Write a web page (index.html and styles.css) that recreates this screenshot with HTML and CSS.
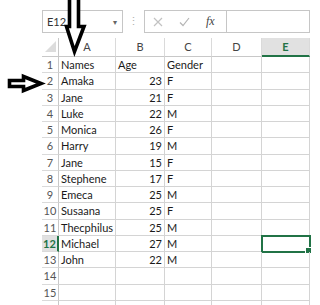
FILE: index.html
```html
<!DOCTYPE html>
<html lang="en">
<head>
  <meta charset="UTF-8">
  <title>Sheet</title>
  <link rel="stylesheet" href="styles.css">
</head>
<body>
  <div class="formula-bar">
    <div class="name-box">
      <span>E12</span>
      <span class="drop">&#9662;</span>
    </div>
    <div class="grip">&#8942;</div>
    <div class="fn-box">
      <svg class="ico" width="10" height="10" viewBox="0 0 10 10"><path d="M1 1 L9 9 M9 1 L1 9" stroke="#c2c2c2" stroke-width="1.2" fill="none"/></svg>
      <svg class="ico" width="11" height="10" viewBox="0 0 11 10"><path d="M1 5.5 L4 8.5 L10 1" stroke="#b5b5b5" stroke-width="1.2" fill="none"/></svg>
      <span class="fx">fx</span>
    </div>
    <div class="formula-input"></div>
  </div>

  <div class="sheet">
    <div class="corner"><svg width="11" height="11" viewBox="0 0 11 11"><polygon points="11,0 11,11 0,11" fill="#dcdcdc"/></svg></div>
    <div class="col-head">A</div>
    <div class="col-head">B</div>
    <div class="col-head">C</div>
    <div class="col-head">D</div>
    <div class="col-head active">E</div>

    <div class="row-head">1</div><div class="cell">Names</div><div class="cell">Age</div><div class="cell">Gender</div><div class="cell"></div><div class="cell"></div>
    <div class="row-head">2</div><div class="cell">Amaka</div><div class="cell num">23</div><div class="cell">F</div><div class="cell"></div><div class="cell"></div>
    <div class="row-head">3</div><div class="cell">Jane</div><div class="cell num">21</div><div class="cell">F</div><div class="cell"></div><div class="cell"></div>
    <div class="row-head">4</div><div class="cell">Luke</div><div class="cell num">22</div><div class="cell">M</div><div class="cell"></div><div class="cell"></div>
    <div class="row-head">5</div><div class="cell">Monica</div><div class="cell num">26</div><div class="cell">F</div><div class="cell"></div><div class="cell"></div>
    <div class="row-head">6</div><div class="cell">Harry</div><div class="cell num">19</div><div class="cell">M</div><div class="cell"></div><div class="cell"></div>
    <div class="row-head">7</div><div class="cell">Jane</div><div class="cell num">15</div><div class="cell">F</div><div class="cell"></div><div class="cell"></div>
    <div class="row-head">8</div><div class="cell">Stephene</div><div class="cell num">17</div><div class="cell">F</div><div class="cell"></div><div class="cell"></div>
    <div class="row-head">9</div><div class="cell">Emeca</div><div class="cell num">25</div><div class="cell">M</div><div class="cell"></div><div class="cell"></div>
    <div class="row-head">10</div><div class="cell">Susaana</div><div class="cell num">25</div><div class="cell">F</div><div class="cell"></div><div class="cell"></div>
    <div class="row-head">11</div><div class="cell">Thecphilus</div><div class="cell num">25</div><div class="cell">M</div><div class="cell"></div><div class="cell"></div>
    <div class="row-head active">12</div><div class="cell">Michael</div><div class="cell num">27</div><div class="cell">M</div><div class="cell"></div><div class="cell selected"></div>
    <div class="row-head">13</div><div class="cell">John</div><div class="cell num">22</div><div class="cell">M</div><div class="cell"></div><div class="cell"></div>
    <div class="row-head">14</div><div class="cell"></div><div class="cell"></div><div class="cell"></div><div class="cell"></div><div class="cell"></div>
    <div class="row-head">15</div><div class="cell"></div><div class="cell"></div><div class="cell"></div><div class="cell"></div><div class="cell"></div>
    <div class="row-head"></div><div class="cell"></div><div class="cell"></div><div class="cell"></div><div class="cell"></div><div class="cell"></div>
  </div>

  <!-- annotation arrows drawn over the sheet -->
  <svg class="arrows" width="320" height="305" viewBox="0 0 320 305">
    <path d="M69.5 -2 L69.5 26.5 L66.5 26.5 L74.5 51.5 L84 26.5 L78.5 26.5 L78.5 -2" fill="#fff" stroke="#000" stroke-width="3.6" stroke-linejoin="miter"/>
    <path d="M9.5 80.5 L23.5 80.5 L23.5 76.5 L41 83.5 L23.5 90.5 L23.5 86.5 L9.5 86.5 Z" fill="#fff" stroke="#000" stroke-width="3.6" stroke-linejoin="miter"/>
  </svg>
</body>
</html>
```

FILE: styles.css
```css
* {
  box-sizing: border-box;
}

html, body {
  margin: 0;
  width: 320px;
  height: 305px;
  overflow: hidden;
  background: #fff;
}

body {
  position: relative;
  font-family: Lato, "Liberation Sans", sans-serif;
  font-size: 11px;
  color: #1a1a1a;
}

.formula-bar {
  display: flex;
  height: 23px;
  margin: 10px 0 0 42px;
}

.name-box {
  width: 81px;
  display: flex;
  align-items: center;
  justify-content: space-between;
  padding: 0 5px 0 4px;
  border: 1px solid #c6c6c6;
  color: #333;
}

.drop {
  font-size: 8px;
  color: #666;
}

.grip {
  width: 21px;
  text-align: center;
  line-height: 22px;
  color: #b0b0b0;
  font-size: 11px;
}

.fn-box {
  width: 83px;
  display: flex;
  align-items: center;
  gap: 16px;
  padding-left: 8px;
  border: 1px solid #c6c6c6;
}

.fx {
  font-family: "Liberation Serif", serif;
  font-style: italic;
  font-size: 12px;
  color: #444;
}

.formula-input {
  width: 83px;
  border: 1px solid #c6c6c6;
  border-left: none;
}

.sheet {
  display: grid;
  grid-template-columns: 17px 57px 49px 47px 50px 48px;
  grid-template-rows: 19px;
  grid-auto-rows: 16.25px;
  margin: 5px 0 0 42px;
}

.corner {
  display: flex;
  align-items: flex-end;
  justify-content: flex-end;
  padding: 0 2px 4px 0;
  border-right: 1px solid #c8c8c8;
  border-bottom: 1px solid #c8c8c8;
}

.col-head {
  text-align: center;
  line-height: 18px;
  color: #444;
  border-right: 1px solid #dadada;
  border-bottom: 1px solid #c8c8c8;
}

.col-head.active {
  background: #e1e1e1;
  color: #217346;
  font-weight: bold;
  border-bottom: 2px solid #217346;
}

.row-head {
  text-align: center;
  line-height: 15.5px;
  color: #555;
  border-right: 1px solid #c8c8c8;
  border-bottom: 1px solid #dadada;
}

.row-head.active {
  background: #e1e1e1;
  color: #217346;
  font-weight: bold;
  border-right: 2px solid #217346;
}

.cell {
  position: relative;
  padding: 0 2px;
  line-height: 15.5px;
  white-space: nowrap;
  border-right: 1px solid #d4d4d4;
  border-bottom: 1px solid #d4d4d4;
}

.num {
  text-align: right;
}

.selected {
  outline: 2px solid #217346;
  outline-offset: -1px;
}

.selected::after {
  content: "";
  position: absolute;
  right: -3px;
  bottom: -3px;
  width: 5px;
  height: 5px;
  background: #217346;
  border: 1px solid #fff;
}

.arrows {
  position: absolute;
  left: 0;
  top: 0;
  pointer-events: none;
}
```
